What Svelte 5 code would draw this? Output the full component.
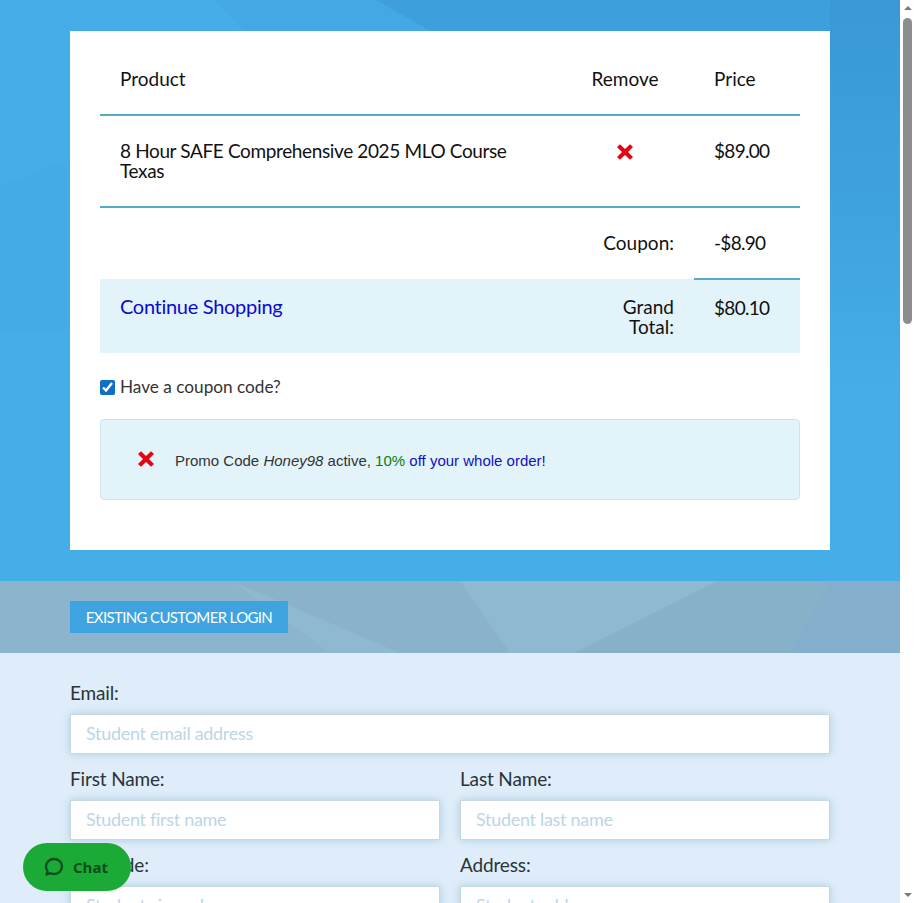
<script lang="ts">
	let hasCoupon = $state(true);
	let email = $state('');
	const fields = [
		{ label: 'First Name:', placeholder: 'Student first name' },
		{ label: 'Last Name:', placeholder: 'Student last name' },
		{ label: 'Zip Code:', placeholder: 'Student zip code' },
		{ label: 'Address:', placeholder: 'Student address' }
	];
</script>

{#snippet cross()}
	<svg class="cross" width="16" height="16" viewBox="0 0 16 16" aria-hidden="true">
		<path d="M0 3 3 .3 8 5 13 .3 16 3 11 8l5 5-3 2.700L8 11l-5 4.700L0 13l5-5z" fill="#e30613" />
	</svg>
{/snippet}

<div class="viewport">
	<main class="page">
		<section class="cart-section">
			<svg class="polys" viewBox="0 0 900 581" preserveAspectRatio="none" aria-hidden="true">
				<defs>
					<linearGradient id="strip" x1="0" y1="0" x2="0" y2="1">
						<stop offset="0" stop-color="#3a98d6" />
						<stop offset="0.55" stop-color="#3fa3e0" />
						<stop offset="1" stop-color="#45aee8" />
					</linearGradient>
				</defs>
				<polygon points="0,185 70,160 70,330 0,330" fill="#44abe6" />
				<polygon points="215,0 376,0 430,31 245,31" fill="#44a8e4" />
				<polygon points="376,0 752,0 737,31 430,31" fill="#3f9fdc" />
				<polygon points="752,0 841,0 830,31 737,31" fill="#3d9fdc" />
				<rect x="830" y="0" width="70" height="400" fill="url(#strip)" />
			</svg>
			<div class="card">
				<table>
					<thead>
						<tr>
							<th class="product">Product</th>
							<th class="remove">Remove</th>
							<th class="price">Price</th>
						</tr>
					</thead>
					<tbody>
						<tr class="item">
							<td class="name">8 Hour SAFE Comprehensive 2025 MLO Course Texas</td>
							<td class="remove">{@render cross()}</td>
							<td class="money">$89.00</td>
						</tr>
						<tr class="coupon">
							<td></td>
							<td class="label">Coupon:</td>
							<td class="amount money">-$8.90</td>
						</tr>
						<tr class="total">
							<td class="shop"><a href="#shop">Continue Shopping</a></td>
							<td class="label">Grand<br />Total:</td>
							<td class="money">$80.10</td>
						</tr>
					</tbody>
				</table>

				<label class="coupon-check">
					<input type="checkbox" bind:checked={hasCoupon} />
					<span>Have a coupon code?</span>
				</label>

				<div class="promo">
					<span class="promo-icon">{@render cross()}</span>
					<p>Promo Code <em>Honey98</em> active, <span class="green">10%</span> <span class="blue">off your whole order!</span></p>
				</div>
			</div>
		</section>

		<section class="login-band">
			<svg class="polys" viewBox="0 0 900 72" preserveAspectRatio="none" aria-hidden="true">
				<polygon points="0,0 232,0 330,72 0,72" fill="#8cb5cd" />
				<polygon points="232,0 460,0 510,72 400,72" fill="#8ab2cb" />
				<polygon points="574,72 717,0 900,0 900,72" fill="#87b1c9" />
				<polygon points="790,72 830,0 900,0 900,72" fill="#83afcd" />
			</svg>
			<button class="login-btn" type="button">Existing Customer Login</button>
		</section>

		<section class="form-section">
			<div class="field">
				<label for="email">Email:</label>
				<input id="email" type="email" bind:value={email} placeholder="Student email address" />
			</div>
			<div class="grid">
				{#each fields as f}
					<div class="field">
						<label for={f.label}>{f.label}</label>
						<input id={f.label} type="text" placeholder={f.placeholder} />
					</div>
				{/each}
			</div>
		</section>
	</main>

	<aside class="scrollbar" aria-hidden="true">
		<span class="arrow up"></span>
		<span class="track"><span class="thumb"></span></span>
		<span class="arrow down"></span>
	</aside>
</div>

<button class="chat" type="button">
	<svg width="20" height="20" viewBox="0 0 20 20" aria-hidden="true">
		<path d="M10 2c4.500 0 8 3.300 8 7.500S14.500 17 10 17c-1.300 0-2.500-.3-3.600-.8L2.500 17.600l1-3.500C2.600 12.900 2 11.300 2 9.500 2 5.300 5.500 2 10 2z" fill="none" stroke="#0b4d1c" stroke-width="2.300" stroke-linejoin="round" />
	</svg>
	<span>Chat</span>
</button>

<style>
	:global(body) {
		margin: 0;
		font-family: 'Lato', 'Noto Sans', sans-serif;
		color: #222;
	}

	.viewport {
		display: flex;
		width: 915px;
		height: 903px;
		overflow: hidden;
	}

	.page {
		width: 900px;
		flex: none;
	}

	.cart-section {
		position: relative;
		background: #45aee8;
		padding: 31px 70px;
		height: 519px;
	}

	.polys {
		position: absolute;
		inset: 0;
		width: 100%;
		height: 100%;
	}

	.card {
		position: relative;
		background: #fff;
		padding: 13px 30px 50px;
		height: 456px;
	}

	table {
		width: 700px;
		border-collapse: collapse;
		table-layout: fixed;
		font-size: 19px;
		line-height: 20px;
		color: #111;
	}

	th {
		font-weight: 400;
		text-align: left;
		padding: 25px 20px;
	}

	th.product {
		width: 416px;
	}

	th.remove {
		width: 98px;
	}

	th.remove,
	td.remove {
		text-align: center;
	}

	td {
		padding: 25px 20px;
		vertical-align: top;
	}

	.name {
		letter-spacing: -0.37px;
	}

	.money {
		letter-spacing: -0.7px;
	}

	thead tr,
	.item {
		border-bottom: 2px solid #55a9c9;
	}

	td.remove {
		padding-top: 28px;
	}

	.cross {
		display: inline-block;
		vertical-align: top;
		flex: none;
	}

	.label {
		text-align: right;
	}

	.amount {
		border-bottom: 2px solid #55a9c9;
	}

	.total td {
		background: #e3f3fa;
		padding: 18px 20px 16px;
	}

	.total td.shop {
		padding-top: 17px;
	}

	.total a {
		font-size: 20px;
		letter-spacing: -0.3px;
		color: #0a0ad0;
		text-decoration: none;
	}

	.coupon-check {
		display: flex;
		align-items: center;
		gap: 5px;
		margin-top: 24px;
		font-size: 17.2px;
		line-height: 20px;
		color: #333;
	}

	.coupon-check input {
		width: 15px;
		height: 15px;
		margin: 0;
		accent-color: #0f6fc6;
	}

	.promo {
		display: flex;
		align-items: center;
		gap: 21px;
		box-sizing: border-box;
		height: 81px;
		margin-top: 22px;
		padding-left: 37px;
		background: #e3f3fa;
		border: 1px solid #cfe4ea;
		border-radius: 4px;
	}

	.promo-icon {
		display: block;
		height: 16px;
		margin-bottom: 2px;
	}

	.promo p {
		margin: 2px 0 0;
		font-family: 'Liberation Sans', Arial, sans-serif;
		font-size: 15px;
		color: #333;
	}

	.green {
		color: #0a7d12;
	}

	.blue {
		color: #1111bb;
	}

	.login-band {
		position: relative;
		height: 72px;
		box-sizing: border-box;
		padding: 20px 70px;
		background: #8fb9d0;
	}

	.login-btn {
		position: relative;
		display: block;
		width: 218px;
		height: 32px;
		padding: 0;
		border: 0;
		background: #3ea3de;
		color: #fff;
		font-family: inherit;
		font-size: 15px;
		letter-spacing: -0.65px;
		text-transform: uppercase;
	}

	.form-section {
		background: #deedf9;
		padding: 30px 70px;
		height: 220px;
	}

	.grid {
		display: grid;
		grid-template-columns: 370px 370px;
		column-gap: 20px;
	}

	.field {
		display: flex;
		flex-direction: column;
	}

	.field label {
		font-size: 19px;
		line-height: 20px;
		letter-spacing: -0.15px;
		margin-bottom: 11px;
		color: #2b3338;
	}

	.field input {
		box-sizing: border-box;
		width: 100%;
		height: 40px;
		margin-bottom: 15px;
		padding: 0 15px 2px;
		border: 1px solid #c6d8e2;
		background: #fff;
		font-family: inherit;
		font-size: 18px;
		letter-spacing: -0.3px;
		box-shadow: 0 0 8px rgba(120, 165, 190, 0.45);
	}

	.field input::placeholder {
		color: #bcd6e4;
	}

	.scrollbar {
		display: flex;
		flex-direction: column;
		align-items: center;
		width: 15px;
		height: 903px;
		background: #fff;
	}

	.arrow {
		flex: none;
		width: 0;
		height: 0;
		margin: 6px 0;
		border-left: 4px solid transparent;
		border-right: 4px solid transparent;
	}

	.up {
		border-bottom: 4px solid #7a7a7a;
	}

	.down {
		border-top: 4px solid #7a7a7a;
	}

	.track {
		flex: 1;
		width: 100%;
		display: block;
	}

	.thumb {
		display: block;
		width: 9px;
		height: 306px;
		margin: 2px auto 0;
		background: #8d8d8d;
		border-radius: 5px;
	}

	.chat {
		position: fixed;
		left: 23px;
		top: 843px;
		display: flex;
		align-items: center;
		gap: 9px;
		width: 108px;
		height: 48px;
		padding: 0 0 0 21px;
		border: 0;
		border-radius: 24px;
		background: #1aaa35;
		color: #0b4d1c;
		font-family: 'Open Sans', sans-serif;
		font-size: 15px;
		font-weight: 700;
	}
</style>
